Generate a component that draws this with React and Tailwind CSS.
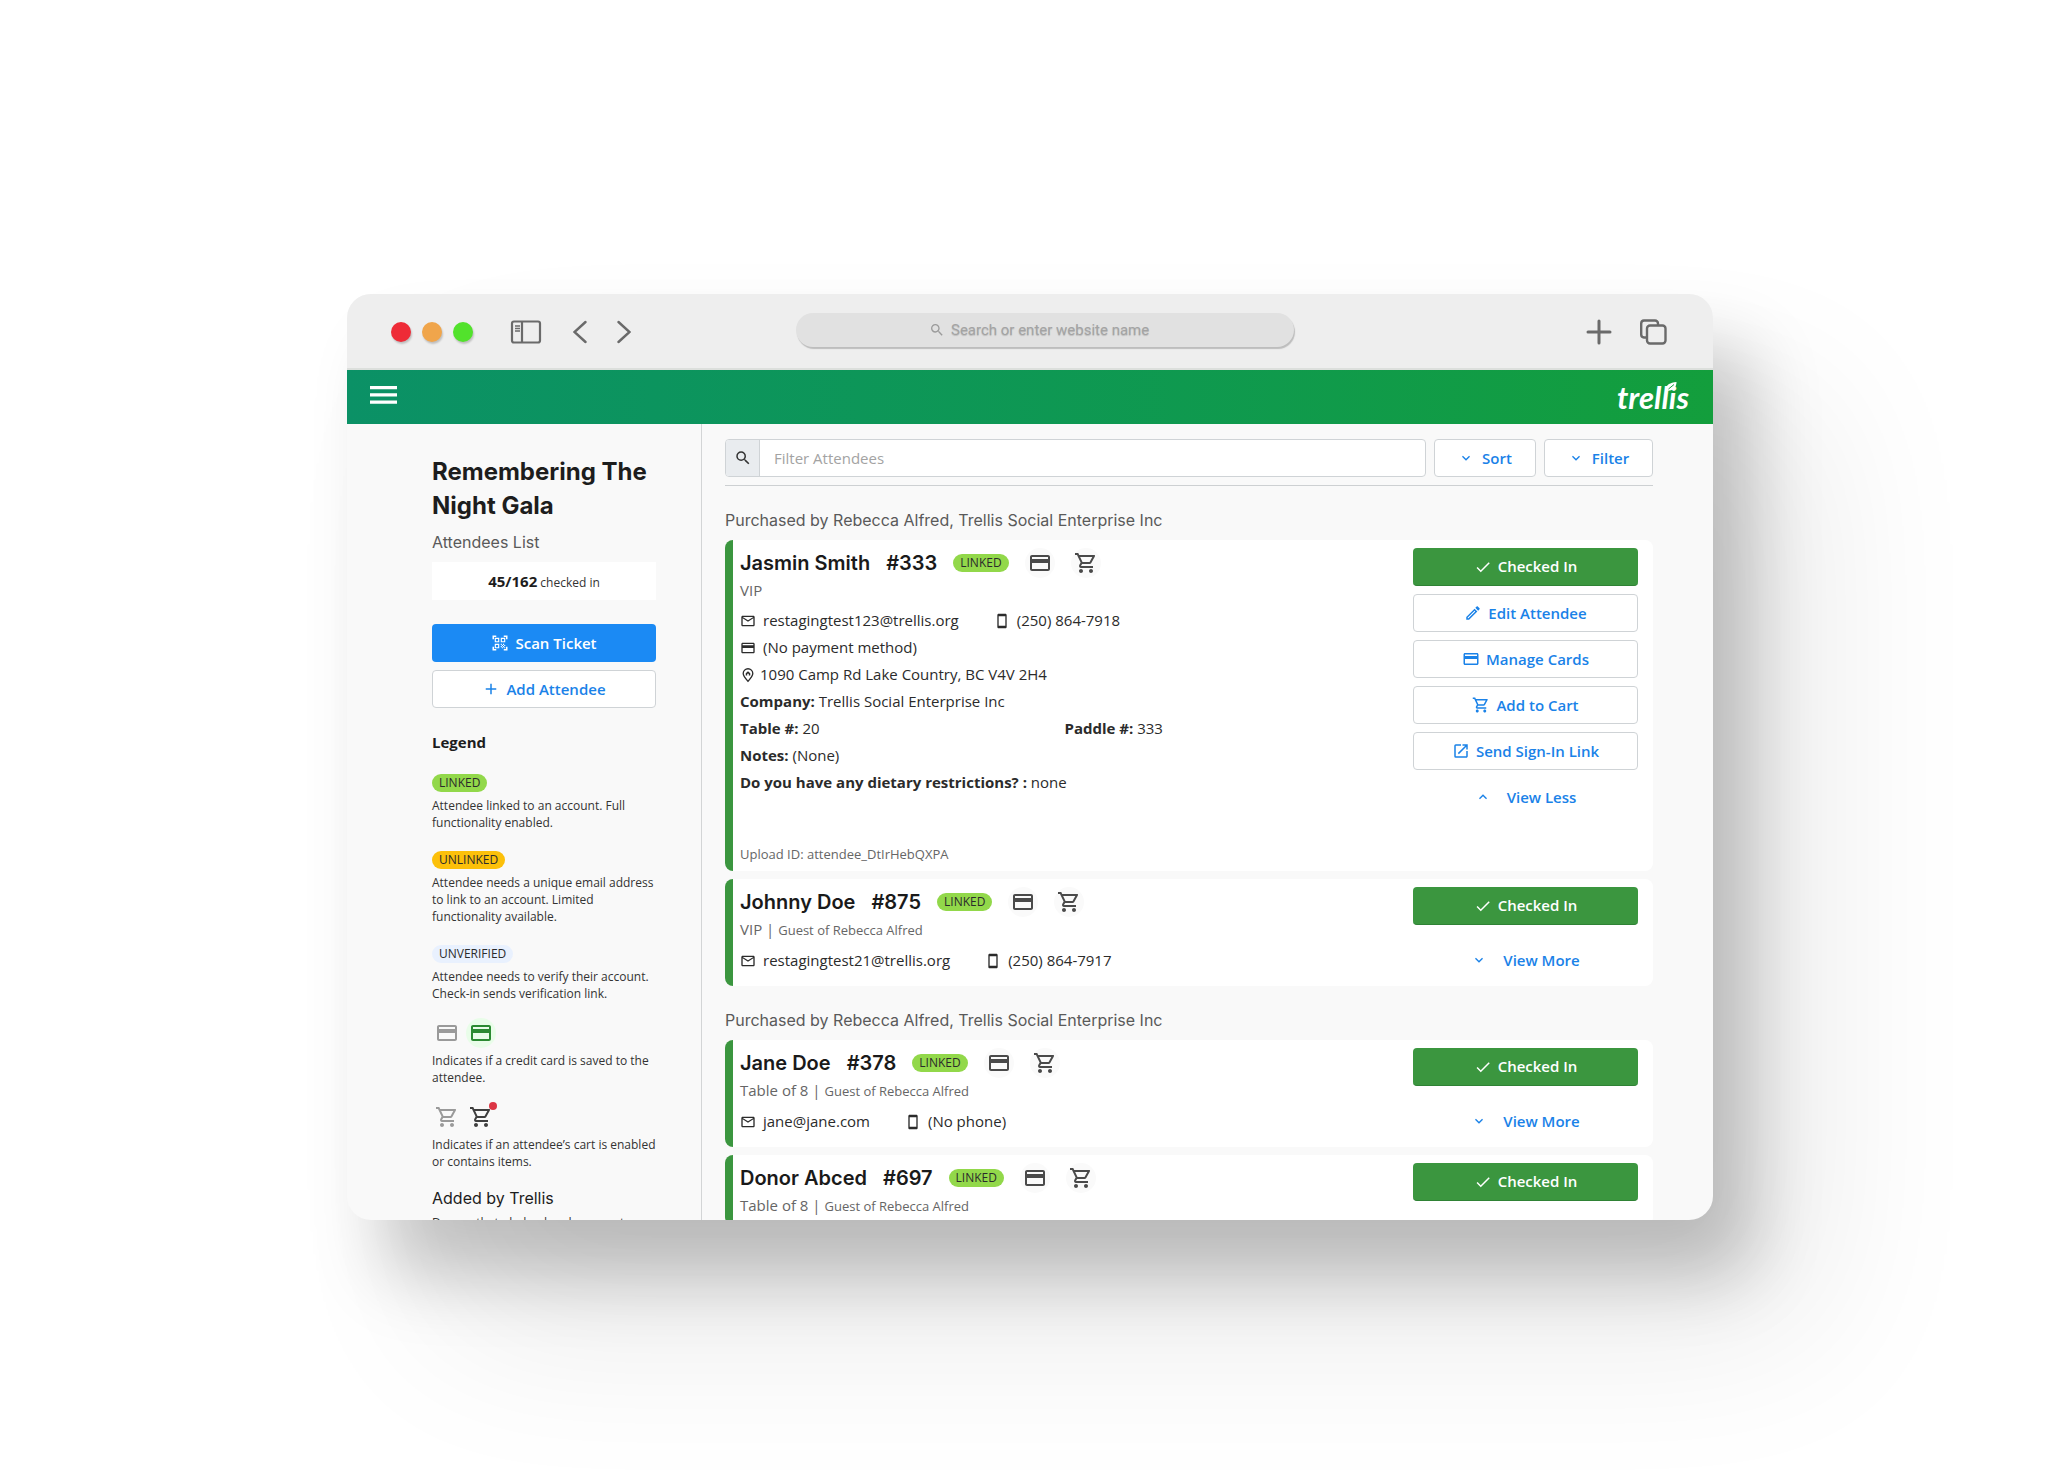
/**
 * Attendee check-in screen, shown inside a desktop browser window
 */

import { useState } from 'react';
import clsx from 'clsx';
import {
  MdAdd,
  MdCheck,
  MdExpandLess,
  MdExpandMore,
  MdOpenInNew,
  MdOutlineCreditCard,
  MdOutlineEdit,
  MdOutlineEmail,
  MdOutlineShoppingCart,
  MdOutlineSmartphone,
  MdQrCodeScanner,
  MdSearch,
} from 'react-icons/md';

const groups = [
  {
    purchaser: 'Purchased by Rebecca Alfred, Trellis Social Enterprise Inc',
    attendees: [
      {
        name: 'Jasmin Smith',
        number: '#333',
        ticket: 'VIP',
        email: 'restagingtest123@trellis.org',
        phone: '(250) 864-7918',
        details: {
          payment: '(No payment method)',
          address: '1090 Camp Rd Lake Country, BC V4V 2H4',
          company: 'Trellis Social Enterprise Inc',
          table: '20',
          paddle: '333',
          notes: '(None)',
          dietary: 'none',
          uploadId: 'attendee_DtIrHebQXPA',
        },
      },
      {
        name: 'Johnny Doe',
        number: '#875',
        ticket: 'VIP',
        guestOf: 'Guest of Rebecca Alfred',
        email: 'restagingtest21@trellis.org',
        phone: '(250) 864-7917',
      },
    ],
  },
  {
    purchaser: 'Purchased by Rebecca Alfred, Trellis Social Enterprise Inc',
    attendees: [
      {
        name: 'Jane Doe',
        number: '#378',
        ticket: 'Table of 8',
        guestOf: 'Guest of Rebecca Alfred',
        email: 'jane@jane.com',
        phone: '(No phone)',
      },
      {
        name: 'Donor Abced',
        number: '#697',
        ticket: 'Table of 8',
        guestOf: 'Guest of Rebecca Alfred',
      },
    ],
  },
];

const badgeColors = {
  LINKED: 'bg-[#92d84a]',
  UNLINKED: 'bg-[#fcc00a]',
  UNVERIFIED: 'bg-[#e9f1fe]',
};

const buttonStyles = {
  primary: 'bg-[#1b8af4] text-white gap-1.5',
  success: 'bg-[#3b963f] text-white gap-1.5 border-b border-[#2f8235]',
  outline: 'bg-white text-[#1a82e8] gap-1.5 border border-[#cfd3d6]',
  menu: 'bg-white text-[#1a82e8] gap-2 border border-[#cfd3d6]',
  link: 'text-[#1a82e8] gap-4',
};

const Badge = ({ label }) => (
  <span
    className={clsx(
      'flex h-[18px] w-fit items-center rounded-full px-[7px] text-xs text-[#2b2b2b]',
      badgeColors[label]
    )}
  >
    {label}
  </span>
);

const Button = ({ variant = 'outline', className = 'w-full', icon, children, onClick }) => (
  <button
    type="button"
    onClick={onClick}
    className={clsx(
      'flex h-[38px] items-center justify-center rounded text-[15px] font-semibold',
      buttonStyles[variant],
      className
    )}
  >
    {icon}
    {children}
  </button>
);

const IconCircle = ({ className, children }) => (
  <span className={clsx('relative flex size-[30px] items-center justify-center rounded-full', className)}>
    {children}
  </span>
);

const HomePinIcon = () => (
  <svg width="16" height="16" viewBox="0 0 24 24" fill="none" stroke="currentColor" strokeWidth="2">
    <path d="M12 21.500C7.500 16.500 4.800 13.300 4.800 9.800a7.200 7.200 0 0 1 14.400 0c0 3.500-2.700 6.700-7.200 11.700z" />
    <path d="M8.600 12.800V9.500L12 6.300l3.400 3.200v3.300h-2.200v-2.500h-2.400v2.500z" fill="currentColor" stroke="none" />
  </svg>
);

const BrowserBar = () => (
  <div className="flex h-[76px] shrink-0 items-center border-b-2 border-[#dcdfdc] bg-[#eeeeee] px-[44px] pt-0.5 text-[#6a6a6a]">
    <div className="flex flex-1 items-center">
      <div className="flex gap-[11px]">
        <span className="size-5 rounded-full bg-[#ee2b37] shadow-[1px_2px_2px_rgba(0,0,0,0.2)]" />
        <span className="size-5 rounded-full bg-[#f0a54b] shadow-[1px_2px_2px_rgba(0,0,0,0.2)]" />
        <span className="size-5 rounded-full bg-[#52e22c] shadow-[1px_2px_2px_rgba(0,0,0,0.2)]" />
      </div>
      <button type="button" aria-label="Show sidebar" className="ml-9">
        <svg width="34" height="24" viewBox="0 0 34 24" fill="none" stroke="currentColor" strokeWidth="2.2">
          <rect x="3" y="1.500" width="28" height="21" rx="2" />
          <path d="M13 1.500v21" />
          <path d="M6 6h5M6 8.500h5M6 11h5" strokeWidth="1.6" />
        </svg>
      </button>
      <button type="button" aria-label="Back" className="ml-[30px]">
        <svg width="14" height="24" viewBox="0 0 14 24" fill="none" stroke="currentColor" strokeWidth="2.4" strokeLinecap="round">
          <path d="M12.500 2L1.500 12l11 10" />
        </svg>
      </button>
      <button type="button" aria-label="Forward" className="ml-[30px]">
        <svg width="14" height="24" viewBox="0 0 14 24" fill="none" stroke="currentColor" strokeWidth="2.4" strokeLinecap="round">
          <path d="M1.500 2l11 10-11 10" />
        </svg>
      </button>
    </div>
    <label className="mb-1 ml-[30px] flex h-[34px] w-[498px] items-center justify-center gap-1.5 rounded-[18px] bg-[#e1e1e1] text-[#9b9b9b] shadow-[1px_2px_1px_#bdbdbd]">
      <MdSearch size={16} />
      <input
        type="text"
        aria-label="Address"
        placeholder="Search or enter website name"
        className="w-[210px] font-[Roboto] text-[15px] outline-none placeholder:text-[#a3a3a3] placeholder:[text-shadow:0_1px_1px_#bcbcbc]"
      />
    </label>
    <div className="flex flex-1 items-center justify-end gap-[28px]">
      <button type="button" aria-label="New tab">
        <svg width="26" height="26" viewBox="0 0 26 26" stroke="currentColor" strokeWidth="3" strokeLinecap="round">
          <path d="M13 2v22M2 13h22" />
        </svg>
      </button>
      <button type="button" aria-label="Show all tabs">
        <svg width="29" height="26" viewBox="0 0 29 26" fill="none" stroke="currentColor" strokeWidth="2.4" strokeLinejoin="round">
          <path d="M7 18.500H4A3 3 0 0 1 1.200 15.500V4.500A3 3 0 0 1 4 1.500H15A3 3 0 0 1 18 4.500V6" />
          <rect x="7" y="6.500" width="18.500" height="18" rx="3" />
        </svg>
      </button>
    </div>
  </div>
);

const AppHeader = () => (
  <header className="flex h-[54px] shrink-0 items-center justify-between bg-gradient-to-r from-[#0b9166] to-[#139e3c] pr-6 pl-[23px] text-white">
    <button type="button" aria-label="Menu" className="pb-1">
      <svg width="27" height="18" viewBox="0 0 27 18" fill="currentColor">
        <path d="M0 0h27v3.200H0zM0 7.300h27v3.200H0zM0 14.600h27v3.200H0z" />
      </svg>
    </button>
    <a href="#home" className="relative font-[Lato] text-[31px] leading-none font-bold italic">
      trellis
      <svg className="absolute top-0 right-3" width="11" height="9" viewBox="0 0 11 9">
        <path d="M0 8.500C-.5 3 3 1 10.500 0 10.500 5 7 9.500 0 8.500z" fill="white" />
        <path d="M2.500 7L8 2.500" stroke="#139e3c" strokeWidth="1" />
      </svg>
    </a>
  </header>
);

const LegendText = ({ children }) => (
  <p className="-mr-2 text-xs leading-[17px] text-[#333333]">{children}</p>
);

const Sidebar = () => (
  <aside className="w-[355px] shrink-0 border-r border-[#d3d5d6] pt-[31px] pr-[45px] pl-[85px]">
    <h1 className="font-[Inter] text-2xl leading-[34px] font-bold text-[#1d1d1d]">
      Remembering The Night Gala
    </h1>
    <p className="mt-[7px] font-[Inter] text-base text-[#5a5a5a]">Attendees List</p>
    <p className="mt-2 h-[38px] bg-white text-center text-xs leading-[38px] text-[#333333]">
      <b className="text-[15px] text-[#1d1d1d]">45/162</b> checked in
    </p>
    <div className="mt-6 flex flex-col gap-2">
      <Button variant="primary" icon={<MdQrCodeScanner size={18} />}>Scan Ticket</Button>
      <Button icon={<MdAdd size={18} />}>Add Attendee</Button>
    </div>

    <h2 className="mt-[22px] text-[15px] leading-6 font-bold">Legend</h2>
    <div className="mt-5 flex flex-col gap-5">
      <div className="flex flex-col gap-[5px]">
        <Badge label="LINKED" />
        <LegendText>Attendee linked to an account. Full functionality enabled.</LegendText>
      </div>
      <div className="flex flex-col gap-[5px]">
        <Badge label="UNLINKED" />
        <LegendText>
          Attendee needs a unique email address to link to an account. Limited functionality available.
        </LegendText>
      </div>
      <div className="flex flex-col gap-[5px]">
        <Badge label="UNVERIFIED" />
        <LegendText>Attendee needs to verify their account. Check-in sends verification link.</LegendText>
      </div>
    </div>
    <div className="mt-4 flex flex-col gap-4">
      <div className="flex flex-col gap-1">
        <div className="flex gap-1">
          <IconCircle className="text-[#9a9a9a]"><MdOutlineCreditCard size={24} /></IconCircle>
          <IconCircle className="bg-[#e9fde9] text-[#2b8a32]"><MdOutlineCreditCard size={24} /></IconCircle>
        </div>
        <LegendText>Indicates if a credit card is saved to the attendee.</LegendText>
      </div>
      <div className="flex flex-col gap-1">
        <div className="flex gap-1">
          <IconCircle className="text-[#9a9a9a]"><MdOutlineShoppingCart size={24} /></IconCircle>
          <IconCircle className="text-[#3f3f3f]">
            <MdOutlineShoppingCart size={24} />
            <span className="absolute top-0 -right-px size-2 rounded-full bg-[#dc3545]" />
          </IconCircle>
        </div>
        <LegendText>Indicates if an attendee’s cart is enabled or contains items.</LegendText>
      </div>
    </div>

    <h3 className="mt-4 font-[Inter] text-base text-[#1d1d1d]">Added by Trellis</h3>
    <div className="mt-1">
      <LegendText>Donors that pledged and were not an</LegendText>
    </div>
  </aside>
);

const Field = ({ label, children }) => (
  <p className="leading-[27px]">
    <b>{label}</b> {children}
  </p>
);

const AttendeeCard = ({ attendee }) => {
  const [open, setOpen] = useState(Boolean(attendee.details));
  const details = attendee.details;
  const expanded = open && details;

  return (
    <article className="flex gap-6 rounded-lg border-l-8 border-[#3b963f] bg-white pt-2 pr-[15px] pb-[7px] pl-[7px] text-[15px] text-[#2b2b2b]">
      <div className="min-w-0 flex-1">
        <div className="flex h-[30px] items-center gap-4">
          <h3 className="font-[Inter] text-xl font-semibold text-[#1a1a1a]">{attendee.name}</h3>
          <span className="font-[Inter] text-xl font-semibold text-[#1a1a1a]">{attendee.number}</span>
          <Badge label="LINKED" />
          <IconCircle className="bg-[#fafafa] text-[#4a4a4a]"><MdOutlineCreditCard size={24} /></IconCircle>
          <IconCircle className="bg-[#fafafa] text-[#4a4a4a]"><MdOutlineShoppingCart size={24} /></IconCircle>
        </div>
        <p className="leading-6 text-[#666666]">
          {attendee.ticket}
          {attendee.guestOf && <> | <span className="text-[13px]">{attendee.guestOf}</span></>}
        </p>
        {attendee.email && (
          <div className="mt-[5px] flex h-[27px] items-center gap-[35px]">
            <span className="flex items-center gap-[7px]">
              <MdOutlineEmail size={16} />
              {attendee.email}
            </span>
            <span className="flex items-center gap-[7px]">
              <MdOutlineSmartphone size={16} />
              {attendee.phone}
            </span>
          </div>
        )}
        {expanded && (
          <>
            <p className="flex h-[27px] items-center gap-[7px]">
              <MdOutlineCreditCard size={16} />
              {details.payment}
            </p>
            <p className="flex h-[27px] items-center gap-1">
              <HomePinIcon />
              {details.address}
            </p>
            <Field label="Company:">{details.company}</Field>
            <div className="grid grid-cols-2">
              <Field label="Table #:">{details.table}</Field>
              <Field label="Paddle #:">{details.paddle}</Field>
            </div>
            <Field label="Notes:">{details.notes}</Field>
            <Field label="Do you have any dietary restrictions? :">{details.dietary}</Field>
            <p className="mt-12 text-[13px] leading-5 text-[#666666]">Upload ID: {details.uploadId}</p>
          </>
        )}
      </div>
      <div className={clsx('flex w-[225px] shrink-0 flex-col', expanded ? 'gap-2' : 'gap-4')}>
        <Button variant="success" icon={<MdCheck size={18} />}>Checked In</Button>
        {expanded && (
          <>
            <Button icon={<MdOutlineEdit size={18} />}>Edit Attendee</Button>
            <Button icon={<MdOutlineCreditCard size={18} />}>Manage Cards</Button>
            <Button icon={<MdOutlineShoppingCart size={18} />}>Add to Cart</Button>
            <Button icon={<MdOpenInNew size={18} />}>Send Sign-In Link</Button>
          </>
        )}
        {attendee.email && (
          <Button
            variant="link"
            icon={expanded ? <MdExpandLess size={16} /> : <MdExpandMore size={16} />}
            onClick={() => setOpen(!open)}
          >
            {expanded ? 'View Less' : 'View More'}
          </Button>
        )}
      </div>
    </article>
  );
};

const AttendeeList = () => {
  const [query, setQuery] = useState('');

  return (
    <main className="min-w-0 flex-1 pt-[15px] pr-[60px] pl-[23px]">
      <div className="flex gap-2 border-b border-[#cdd0d2] pb-2">
        <label className="flex h-[38px] flex-1 overflow-hidden rounded border border-[#cfd3d6] bg-white">
          <span className="flex w-[34px] items-center justify-center border-r border-[#cfd3d6] bg-[#e9ecef] text-[#333333]">
            <MdSearch size={18} />
          </span>
          <input
            type="text"
            aria-label="Filter Attendees"
            placeholder="Filter Attendees"
            value={query}
            onChange={(e) => setQuery(e.target.value)}
            className="flex-1 px-[14px] text-[15px] outline-none placeholder:text-[#a3a3a3]"
          />
        </label>
        <Button variant="menu" className="w-[102px]" icon={<MdExpandMore size={16} />}>Sort</Button>
        <Button variant="menu" className="w-[109px]" icon={<MdExpandMore size={16} />}>Filter</Button>
      </div>

      {groups.map((group, i) => (
        <section key={i} className="flex flex-col gap-2 pt-[22px]">
          <h2 className="font-[Inter] text-base text-[#5a5a5a]">{group.purchaser}</h2>
          {group.attendees.map((attendee) => (
            <AttendeeCard key={attendee.number} attendee={attendee} />
          ))}
        </section>
      ))}
    </main>
  );
};

const App = () => (
  <div className="h-screen overflow-hidden bg-white pt-[294px] pr-[335px] pb-[259px] pl-[347px] font-['Open_Sans',sans-serif] text-[#1d1d1d]">
    <div className="flex h-full flex-col overflow-hidden rounded-3xl bg-[#f9f9f9] shadow-[38px_56px_70px_rgba(0,0,0,0.21),100px_110px_170px_rgba(0,0,0,0.09)]">
      <BrowserBar />
      <AppHeader />
      <div className="flex min-h-0 flex-1 overflow-hidden">
        <Sidebar />
        <AttendeeList />
      </div>
    </div>
  </div>
);

export default App;
